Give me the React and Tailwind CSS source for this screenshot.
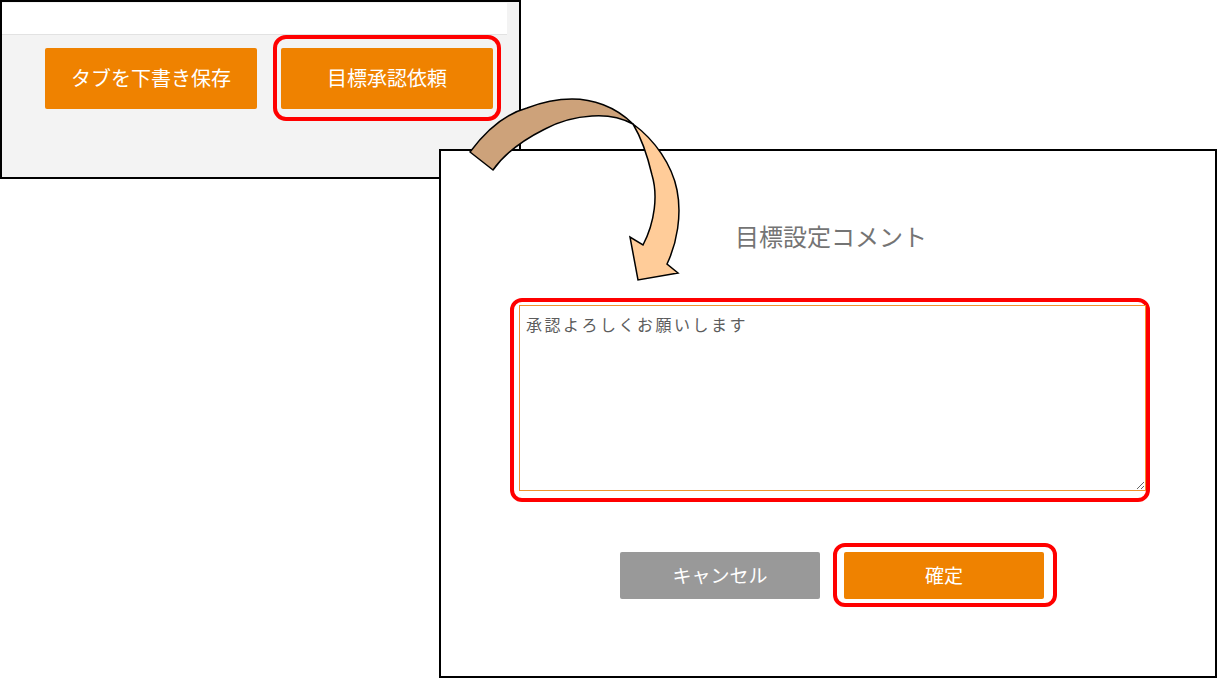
import React from 'react'

const jp = { fontFamily: '"Noto Sans CJK JP", "Noto Sans", sans-serif' }

// ── Curved "down" arrow between the two captures ─────────────────────────────
function CurvedArrow() {
  return (
    <svg
      className="absolute left-0 top-0 pointer-events-none"
      width="1217"
      height="678"
      viewBox="0 0 1217 678"
    >
      {/* back side of the ribbon */}
      <path
        d="M470,152 C485,132 505,114 527,108 C545,101 560,99 572,99 C592,99 615,106 633,124 C618,116 605,115 592,116 C575,117 560,121 545,129 C525,139 505,153 493,170 Z"
        fill="#cda27a"
        stroke="#000"
        strokeWidth="1.5"
        strokeLinejoin="round"
      />
      {/* front side with the head */}
      <path
        d="M633,124 C655,140 672,165 677,190 C682,215 677,243 667,264 L678,273 L638,280 L630,237 L643,245 C655,222 658,195 652,175 C648,158 642,139 633,124 Z"
        fill="#ffcc99"
        stroke="#000"
        strokeWidth="1.5"
        strokeLinejoin="miter"
      />
    </svg>
  )
}

// ── Upper capture: tab footer with two buttons ───────────────────────────────
function TabFooter() {
  return (
    <div className="absolute left-0 top-0 w-[521px] h-[179px] border-2 border-black bg-[#f3f3f3] flex flex-col">
      <div className="mt-[1px] mr-[12px] h-[32px] bg-white border-b border-[#e2e2e2]" />
      <div className="flex items-center pl-[43px] gap-[16px]">
        <button className="w-[212px] h-[61px] rounded-[2px] bg-[#ef8200] text-white text-[20px] font-normal" style={jp}>
          タブを下書き保存
        </button>
        <div className="w-[228px] h-[86px] border-4 border-[#ff0000] rounded-[13px] flex items-center justify-center">
          <button className="w-[212px] h-[61px] rounded-[2px] bg-[#ef8200] text-white text-[20px] font-normal" style={jp}>
            目標承認依頼
          </button>
        </div>
      </div>
    </div>
  )
}

// ── Lower capture: comment dialog ────────────────────────────────────────────
function CommentDialog() {
  return (
    <div className="absolute left-[439px] top-[149px] w-[778px] h-[529px] border-2 border-black bg-white flex flex-col">
      <h2 className="mt-[73px] text-center text-[24px] leading-[24px] text-[#747474] font-normal pl-[6px]" style={jp}>
        目標設定コメント
      </h2>

      <div className="mt-[50px] ml-[69px] w-[640px] h-[204px] border-4 border-[#ff0000] rounded-[12px]">
        <textarea
          readOnly
          defaultValue="承認よろしくお願いします"
          className="block ml-[5px] mt-[3px] w-[627px] h-[186px] border border-[#f0922c] bg-white px-[6px] py-[7px] text-[16px] leading-[22px] tracking-[2.5px] text-[#5c5c5c] font-normal outline-none resize"
          style={jp}
        />
      </div>

      <div className="mt-[41px] ml-[179px] flex items-center gap-[13px]">
        <button className="w-[200px] h-[47px] rounded-[2px] bg-[#999999] text-white text-[19px] font-normal" style={jp}>
          キャンセル
        </button>
        <div className="w-[224px] h-[64px] border-4 border-[#ff0000] rounded-[12px] flex items-center pl-[7px]">
          <button className="w-[200px] h-[47px] rounded-[2px] bg-[#ef8200] text-white text-[19px] font-normal" style={jp}>
            確定
          </button>
        </div>
      </div>
    </div>
  )
}

export default function App() {
  return (
    <div className="relative w-[1217px] h-[678px] bg-white overflow-hidden">
      <TabFooter />
      <CommentDialog />
      <CurvedArrow />
    </div>
  )
}
